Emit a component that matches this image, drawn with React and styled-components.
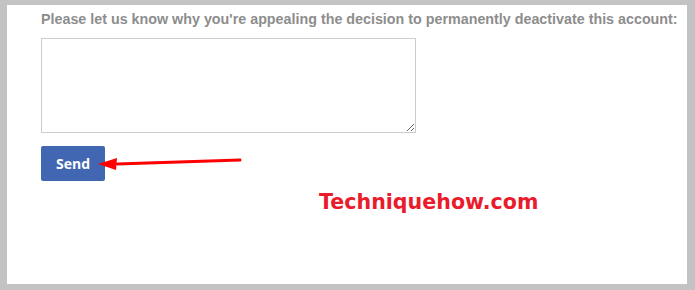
import React from 'react'
import styled, { createGlobalStyle } from 'styled-components'

const Global = createGlobalStyle`
  html, body {
    margin: 0;
    padding: 0;
    background: #c3c3c3;
  }
  * { box-sizing: border-box; }
`

const Frame = styled.div`
  width: 695px;
  height: 290px;
  padding: 5px 8px 6px 7px;
  background: #c3c3c3;
`

const Panel = styled.div`
  position: relative;
  height: 100%;
  background: #fff;
  padding: 6px 0 0 34px;
  display: flex;
  flex-direction: column;
`

const Prompt = styled.p`
  margin: 0;
  font-family: 'Liberation Sans', Arial, sans-serif;
  font-weight: 700;
  font-size: 14.3px;
  line-height: 17px;
  color: #8d8d8d;
  white-space: nowrap;
`

const Field = styled.textarea`
  margin-top: 10px;
  width: 375px;
  height: 95px;
  border: 1px solid #cccccc;
  resize: both;
  font-family: 'Liberation Sans', Arial, sans-serif;
  font-size: 13px;
  outline: none;
`

const Row = styled.div`
  margin-top: 13px;
  display: flex;
`

const SendButton = styled.button`
  width: 64px;
  height: 35px;
  border: none;
  border-radius: 2px;
  background: #4267b2;
  color: #fff;
  font-family: 'Open Sans', Arial, sans-serif;
  font-weight: 700;
  font-size: 14px;
  padding: 0;
  cursor: pointer;
`

const Watermark = styled.div`
  margin: 9px 0 0 278px;
  font-family: 'DejaVu Sans', 'Open Sans', sans-serif;
  font-weight: 700;
  font-size: 20.6px;
  color: #ea1b2a;
`

const Arrow = styled.svg`
  position: absolute;
  left: 90px;
  top: 148px;
  overflow: visible;
`

export default function App() {
  return (
    <>
      <Global />
      <Frame>
        <Panel>
          <Prompt>Please let us know why you're appealing the decision to permanently deactivate this account:</Prompt>
          <Field />
          <Row>
            <SendButton>Send</SendButton>
          </Row>
          <Watermark>Techniquehow.com</Watermark>
          <Arrow width="150" height="20">
            <line x1="143" y1="7" x2="20" y2="11" stroke="#ff0000" strokeWidth="3" strokeLinecap="round" />
            <polygon points="1,11 20,5 19,17" fill="#ff0000" />
          </Arrow>
        </Panel>
      </Frame>
    </>
  )
}
